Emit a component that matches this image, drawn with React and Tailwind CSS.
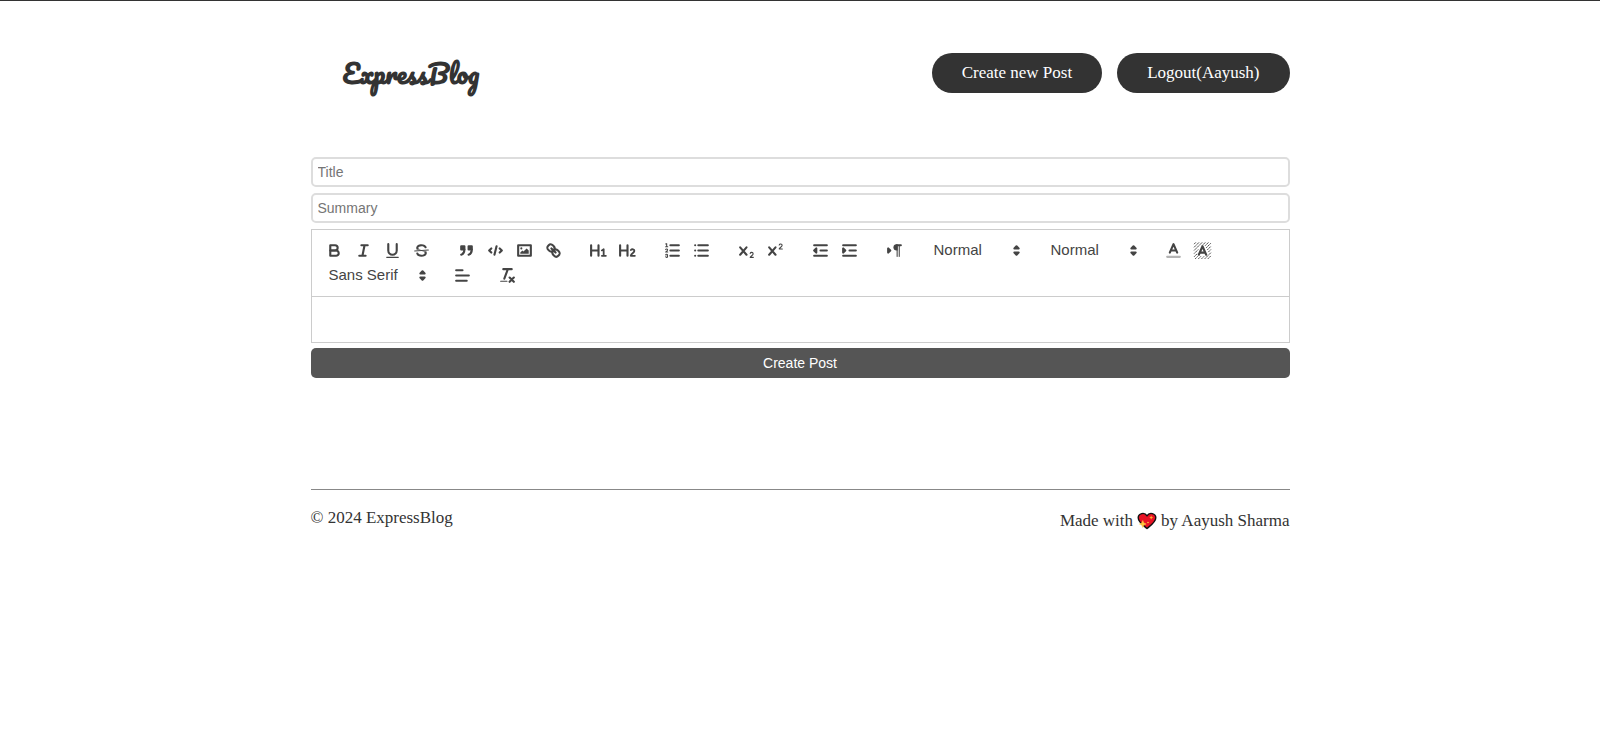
const icons = {
  bold: (
    <>
      <path d="M5,4H9.5A2.5,2.5,0,0,1,12,6.5v0A2.5,2.5,0,0,1,9.5,9H5V4Z" />
      <path d="M5,9h5.5A2.5,2.5,0,0,1,13,11.5v0A2.5,2.5,0,0,1,10.5,14H5V9Z" />
    </>
  ),
  italic: <path d="M7,4H13M5,14H11M8,14L10,4" />,
  underline: (
    <>
      <path d="M5,3V9a4.012,4.012,0,0,0,4,4H9a4.012,4.012,0,0,0,4-4V3" />
      <rect fill="#444" stroke="none" height="1" rx="0.5" width="12" x="3" y="15" />
    </>
  ),
  strike: (
    <>
      <path strokeWidth="1" d="M15.5,8.5L2.5,9.5" />
      <g fill="#444" stroke="none">
        <path d="M9.007,8C6.542,7.791,6,7.519,6,6.5,6,5.792,7.283,5,9,5c1.571,0,2.765.679,2.969,1.309a1,1,0,0,0,1.9-.617C13.356,4.106,11.354,3,9,3,6.2,3,4,4.538,4,6.5a3.2,3.2,0,0,0,.5,1.843Z" />
        <path d="M8.984,10C11.457,10.208,12,10.479,12,11.5c0,0.708-1.283,1.5-3,1.5-1.571,0-2.765-.679-2.969-1.309a1,1,0,1,0-1.9.617C4.644,13.894,6.646,15,9,15c2.8,0,5-1.538,5-3.5a3.2,3.2,0,0,0-.5-1.843Z" />
      </g>
    </>
  ),
  quote: (
    <g fill="#444">
      <rect height="3" width="3" x="4" y="5" />
      <rect height="3" width="3" x="11" y="5" />
      <path d="M7,8c0,4.031-3,5-3,5" />
      <path d="M14,8c0,4.031-3,5-3,5" />
    </g>
  ),
  code: <path d="M5,7L3,9L5,11M13,7L15,9L13,11M10,5L8,13" />,
  image: (
    <>
      <rect height="10" width="12" x="3" y="4" />
      <circle fill="#444" stroke="none" cx="6" cy="7" r="1" />
      <path fill="#444" stroke="none" d="M5,12V11L7,9L8,10L11,7L13,9V12Z" />
    </>
  ),
  link: (
    <>
      <path d="M7,7L11,11" />
      <path d="M8.9,4.577a3.476,3.476,0,0,1,.36,4.679A3.476,3.476,0,0,1,4.577,8.9C3.185,7.5,2.035,6.4,4.217,4.217S7.5,3.185,8.9,4.577Z" />
      <path d="M13.423,9.1a3.476,3.476,0,0,0-4.679-.36,3.476,3.476,0,0,0,.36,4.679c1.392,1.392,2.5,2.542,4.679.36S14.815,10.5,13.423,9.1Z" />
    </>
  ),
  h1: (
    <>
      <path d="M2,4V14M9,4V14M2,9H9" />
      <path strokeWidth="1.7" d="M12.2,8.9L13.9,7.8V14M12.2,14H16" />
    </>
  ),
  h2: (
    <>
      <path d="M2,4V14M9,4V14M2,9H9" />
      <path strokeWidth="1.7" d="M12.2,8.6C13.2,7.3,15.6,7.7,15.5,9.4C15.4,11.4,12.4,11.9,12.1,14H16" />
    </>
  ),
  ordered: (
    <>
      <path d="M7,4H15M7,9H15M7,14H15" />
      <path strokeWidth="1" d="M2.5,5.5H4.5M2.5,2.8L3.5,2.5V5.5" />
      <path strokeWidth="1" d="M4.5,10.5h-2c0-.234,1.85-1.076,1.85-2.234A0.959,0.959,0,0,0,2.5,8.156" />
      <path strokeWidth="1" d="M2.5,14.846a0.959,0.959,0,0,0,1.85-.109A0.7,0.7,0,0,0,3.75,14a0.688,0.688,0,0,0,.6-0.736,0.959,0.959,0,0,0-1.85-.109" />
    </>
  ),
  bullet: <path d="M6,4H15M6,9H15M6,14H15M3,4H3.01M3,9H3.01M3,14H3.01" />,
  sub: (
    <>
      <path d="M3,6L9,13M9,6L3,13" />
      <path strokeWidth="1" d="M12.5,11.8C12.9,10.3,15.2,10.5,15.3,12C15.3,13.7,12.6,14.4,12.5,15.5H15.5" />
    </>
  ),
  sup: (
    <>
      <path d="M3,6L9,13M9,6L3,13" />
      <path strokeWidth="1" d="M12.5,3.8C12.9,2.3,15.2,2.5,15.3,4C15.3,5.7,12.6,6.4,12.5,7.5H15.5" />
    </>
  ),
  outdent: <path d="M3,14H15M3,4H15M9,9H15M5,7V11L3,9Z" />,
  indent: (
    <>
      <path d="M3,14H15M3,4H15M9,9H15" />
      <path fill="#444" d="M3,7V11L5,9Z" />
    </>
  ),
  direction: (
    <>
      <path fill="#444" d="M3,11L5,9L3,7Z" />
      <path d="M15,4H11" />
      <g fill="#444" stroke="none">
        <path d="M11,3a3,3,0,0,0,0,6h1V3H11Z" />
        <rect height="11" width="1" x="11" y="4" />
        <rect height="11" width="1" x="13" y="4" />
      </g>
    </>
  ),
  color: (
    <>
      <path opacity="0.4" d="M3,15H15" />
      <path d="M5.5,11L9,3L12.5,11M11.63,9H6.38" />
    </>
  ),
  background: (
    <>
      <path
        strokeWidth="0.9"
        strokeLinecap="butt"
        strokeDasharray="1.8 0.4"
        d="M1,3L3,1M1,6L6,1M1,9L9,1M1,12L5,8M8.5,4.5L12,1M1,15L4,12M11.5,4.5L15,1M2,17L4.5,14.5M12.5,6.5L17,2M5,17L7.5,14.5M13.5,8.5L17,5M8,17L10.5,14.5M14.5,10.5L17,8M11,17L17,11M14,17L17,14"
      />
      <path d="M5.5,13L9,5L12.5,13M11.63,11H6.38" />
    </>
  ),
  align: <path d="M3,9H15M3,14H13M3,4H9" />,
  clean: (
    <>
      <path d="M5,3H13M6,12L9.35,3M11,11L15,15M15,11L11,15" />
      <rect fill="#444" stroke="none" height="1" rx="0.5" width="7" x="2" y="14" />
    </>
  ),
  arrows: <path fill="#444" d="M7,11L9,13L11,11ZM7,7L9,5L11,7Z" />,
};

function Icon({ name }) {
  return (
    <svg
      viewBox="0 0 18 18"
      className="size-[19px]"
      fill="none"
      stroke="#444"
      strokeWidth="2"
      strokeLinecap="round"
      strokeLinejoin="round"
      aria-hidden="true"
    >
      {icons[name]}
    </svg>
  );
}

function Tools({ items }) {
  return (
    <div className="flex">
      {items.map(([name, label]) => (
        <button
          key={name}
          type="button"
          aria-label={label}
          className="flex h-[25px] w-[29px] items-center justify-center"
        >
          <Icon name={name} />
        </button>
      ))}
    </div>
  );
}

function Picker({ label, options, wide }) {
  return (
    <div className={`grid h-[25px] items-center ${wide ? "w-28" : "w-[101px]"}`}>
      <select
        aria-label={label}
        className="col-start-1 row-start-1 h-[25px] w-full appearance-none bg-transparent pl-[9px] text-[15px] text-[#444]"
      >
        {options.map((option) => (
          <option key={option}>{option}</option>
        ))}
      </select>
      <span className="pointer-events-none col-start-1 row-start-1 justify-self-end">
        <Icon name="arrows" />
      </span>
    </div>
  );
}

function SparklingHeart() {
  return (
    <svg viewBox="0 0 20 18" className="mx-1 h-[18px] w-5" role="img" aria-label="sparkling heart">
      <path
        d="M10,16.5C6.5,13.5,1.2,10.2,1.2,5.8C1.2,1.2,7.6,-0.2,10,3.8C12.4,-0.2,18.8,1.2,18.8,5.8C18.8,10.2,13.5,13.5,10,16.5Z"
        fill="#e81224"
        stroke="#111"
        strokeWidth="1.4"
        strokeLinejoin="round"
      />
      <path
        d="M5.8,8.5L6.8,11L9.2,12L6.8,13L5.8,15.6L4.8,13L2.4,12L4.8,11Z"
        fill="#ffc83d"
        stroke="#ffc83d"
        strokeWidth="0.5"
      />
      <path d="M14.2,3.6L14.8,5L16.2,5.6L14.8,6.2L14.2,7.6L13.6,6.2L12.2,5.6L13.6,5Z" fill="#ffb02e" />
      <circle cx="11" cy="10.5" r="0.8" fill="#ffc83d" />
    </svg>
  );
}

const field =
  "h-[30px] w-full rounded-[5px] border-2 border-[#ddd] bg-white px-[5px] text-sm text-[#333] placeholder:text-[#757575]";
const pill = "flex h-10 items-center rounded-full bg-[#333] px-[30px] text-white";

export default function App() {
  return (
    <div className="border-t border-[#333] font-['Liberation_Serif',serif] text-[17px] text-[#333]">
      <main className="mx-auto max-w-[979px]">
        <header className="flex items-center justify-between pt-[52px]">
          <a href="#home" className="pl-8 font-['Pacifico',cursive] text-[25px] leading-10 font-bold">
            ExpressBlog
          </a>
          <nav className="flex gap-[15px]">
            <a href="#create" className={pill}>Create new Post</a>
            <a href="#logout" className={pill}>Logout(Aayush)</a>
          </nav>
        </header>

        <form className="pt-16 font-['Liberation_Sans',sans-serif]">
          <div className="flex flex-col gap-1.5">
            <input type="text" aria-label="Title" placeholder="Title" className={field} />
            <input type="text" aria-label="Summary" placeholder="Summary" className={field} />
          </div>
          <div className="mt-1.5 border border-[#ccc]">
            <div
              role="toolbar"
              aria-label="Formatting"
              className="flex flex-wrap gap-x-4 border-b border-[#ccc] py-2 pr-12 pl-2"
            >
              <Tools items={[["bold", "Bold"], ["italic", "Italic"], ["underline", "Underline"], ["strike", "Strike"]]} />
              <Tools items={[["quote", "Blockquote"], ["code", "Code block"], ["image", "Image"], ["link", "Link"]]} />
              <Tools items={[["h1", "Heading 1"], ["h2", "Heading 2"]]} />
              <Tools items={[["ordered", "Ordered list"], ["bullet", "Bullet list"]]} />
              <Tools items={[["sub", "Subscript"], ["sup", "Superscript"]]} />
              <Tools items={[["outdent", "Outdent"], ["indent", "Indent"]]} />
              <Tools items={[["direction", "Text direction"]]} />
              <Picker label="Size" options={["Normal", "Small", "Large", "Huge"]} />
              <Picker label="Heading" options={["Normal", "Heading 1", "Heading 2"]} />
              <Tools items={[["color", "Text color"], ["background", "Background color"]]} />
              <Picker label="Font" options={["Sans Serif", "Serif", "Monospace"]} wide />
              <Tools items={[["align", "Align"]]} />
              <Tools items={[["clean", "Clear formatting"]]} />
            </div>
            <div
              contentEditable
              suppressContentEditableWarning
              role="textbox"
              aria-label="Content"
              className="min-h-[45px] px-4 py-3 text-sm outline-none"
            />
          </div>
          <button type="submit" className="mt-[5px] h-[30px] w-full rounded-[5px] bg-[#555] text-sm text-white">
            Create Post
          </button>
        </form>

        <footer className="mt-[111px] flex items-start justify-between border-t border-[#888] pt-[18px] leading-5">
          <p>© 2024 ExpressBlog</p>
          <p className="flex items-center pt-[3px]">
            Made with <SparklingHeart /> by Aayush Sharma
          </p>
        </footer>
      </main>
    </div>
  );
}
